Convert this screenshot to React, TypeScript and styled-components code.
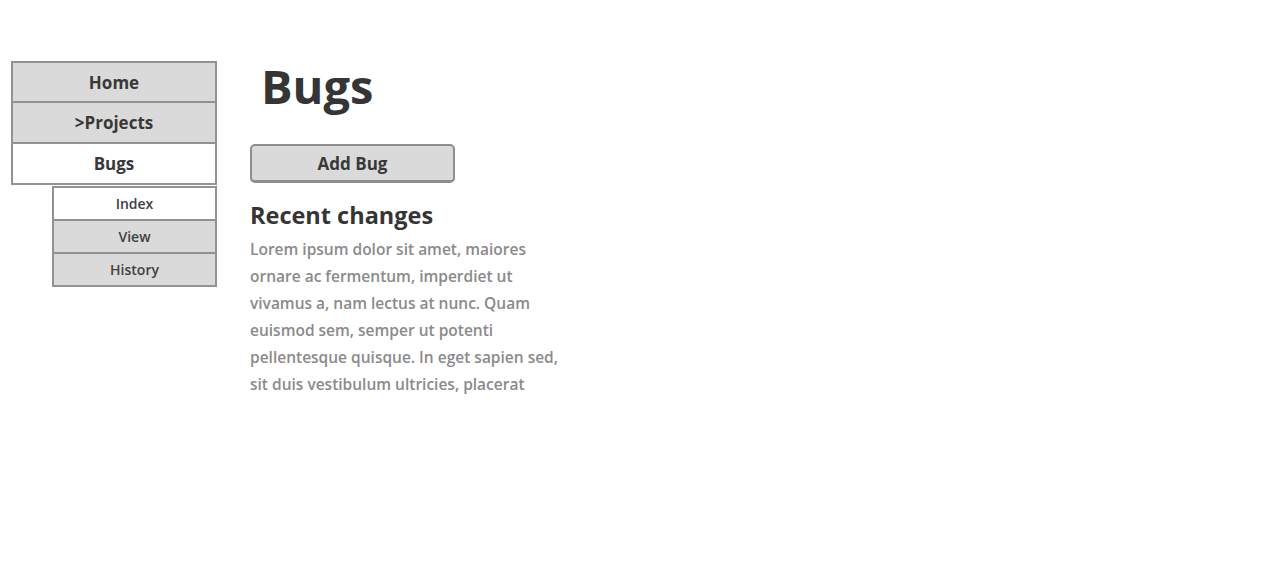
import styled, { createGlobalStyle } from "styled-components";

const GlobalStyle = createGlobalStyle`
  body {
    margin: 0;
    background: #ffffff;
    font-family: "Open Sans", Lato, sans-serif;
  }
`;

const Page = styled.div`
  display: flex;
  flex-direction: row;
  align-items: flex-start;
  padding: 61px 0 0 11px;
  gap: 33px;
`;

const Sidebar = styled.nav`
  width: 206px;
  display: flex;
  flex-direction: column;
`;

const MainMenu = styled.ul`
  list-style: none;
  margin: 0;
  padding: 0;
  border: 2px solid #929292;
`;

const MenuItem = styled.li<{ active?: boolean; first?: boolean }>`
  height: ${(p) => (p.first ? "38px" : "39px")};
  display: flex;
  align-items: center;
  justify-content: center;
  background: ${(p) => (p.active ? "#ffffff" : "#dadada")};
  border-top: ${(p) => (p.first ? "none" : "2px solid #929292")};
  font-size: 17px;
  font-weight: 700;
  color: #383838;
`;

const SubMenu = styled.ul`
  list-style: none;
  margin: 1px 0 0 41px;
  padding: 0;
  border: 2px solid #929292;
`;

const SubItem = styled.li<{ active?: boolean; first?: boolean }>`
  height: 31px;
  display: flex;
  align-items: center;
  justify-content: center;
  background: ${(p) => (p.active ? "#ffffff" : "#dadada")};
  border-top: ${(p) => (p.first ? "none" : "2px solid #929292")};
  font-size: 14px;
  font-weight: 600;
  color: #404040;
`;

const Content = styled.main`
  display: flex;
  flex-direction: column;
  align-items: flex-start;
`;

const Title = styled.h1`
  margin: -2px 0 0 11px;
  font-size: 47px;
  font-weight: 700;
  color: #353535;
  line-height: 54px;
`;

const Button = styled.button`
  margin-top: 31px;
  width: 205px;
  height: 39px;
  border: 2px solid #8e8e8e;
  border-bottom-width: 3px;
  border-radius: 5px;
  background: #dadada;
  font-family: inherit;
  font-size: 17px;
  font-weight: 700;
  color: #383838;
  cursor: pointer;
`;

const SectionTitle = styled.h2`
  margin: 17px 0 0 0;
  font-size: 23.5px;
  font-weight: 700;
  color: #353535;
  line-height: 30px;
`;

const Paragraph = styled.p`
  margin: 6px 0 0 0;
  font-size: 15.5px;
  font-weight: 600;
  line-height: 27px;
  color: #8a8a8a;
  white-space: nowrap;
`;

const lines = [
  "Lorem ipsum dolor sit amet, maiores",
  "ornare ac fermentum, imperdiet ut",
  "vivamus a, nam lectus at nunc. Quam",
  "euismod sem, semper ut potenti",
  "pellentesque quisque. In eget sapien sed,",
  "sit duis vestibulum ultricies, placerat",
];

export default function App() {
  return (
    <>
      <GlobalStyle />
      <Page>
        <Sidebar>
          <MainMenu>
            <MenuItem first>Home</MenuItem>
            <MenuItem>&gt;Projects</MenuItem>
            <MenuItem active>Bugs</MenuItem>
          </MainMenu>
          <SubMenu>
            <SubItem first active>Index</SubItem>
            <SubItem>View</SubItem>
            <SubItem>History</SubItem>
          </SubMenu>
        </Sidebar>
        <Content>
          <Title>Bugs</Title>
          <Button>Add Bug</Button>
          <SectionTitle>Recent changes</SectionTitle>
          <Paragraph>
            {lines.map((line, i) => (
              <span key={i}>
                {line}
                <br />
              </span>
            ))}
          </Paragraph>
        </Content>
      </Page>
    </>
  );
}
